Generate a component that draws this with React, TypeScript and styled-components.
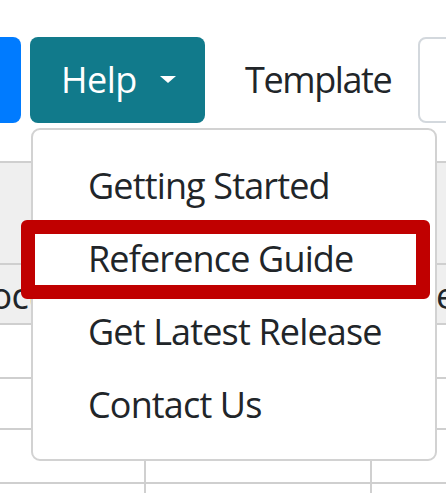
import React from "react";
import styled, { createGlobalStyle } from "styled-components";

const GlobalStyle = createGlobalStyle`
  body {
    margin: 0;
    background: #ffffff;
    overflow: hidden;
    font-family: "Open Sans", "Noto Sans", sans-serif;
    color: #212529;
  }
`;

const Page = styled.div`
  width: 446px;
  height: 493px;
  overflow: hidden;
`;

const Toolbar = styled.div`
  display: flex;
  align-items: center;
  height: 86px;
  padding-top: 37px;
  margin-left: -79px;

  & > * {
    flex-shrink: 0;
  }
`;

const PrimaryButton = styled.div`
  width: 100px;
  height: 86px;
  background: #007bff;
  border-radius: 8px;
  margin-right: 9px;
`;

const DropdownWrap = styled.div`
  position: relative;
`;

const HelpButton = styled.div`
  display: flex;
  align-items: center;
  width: 175px;
  height: 86px;
  box-sizing: border-box;
  padding-left: 31px;
  background: #117a8b;
  border-radius: 8px;
  color: #ffffff;
  font-size: 36px;
  letter-spacing: -0.5px;
  line-height: 86px;
`;

const Caret = styled.span`
  width: 0;
  height: 0;
  margin-left: 23px;
  margin-top: -2px;
  border-top: 7px solid #ffffff;
  border-left: 8px solid transparent;
  border-right: 8px solid transparent;
`;

const Label = styled.div`
  margin-left: 40px;
  font-size: 36px;
  letter-spacing: -1.4px;
  line-height: 86px;
  color: #212529;
`;

const InputBox = styled.div`
  width: 80px;
  height: 86px;
  box-sizing: border-box;
  border: 2px solid #d3d8dd;
  border-radius: 8px;
`;

const Spacer = styled.div<{ $w: number }>`
  width: ${(p) => p.$w}px;
`;

const Menu = styled.div`
  position: absolute;
  top: 91px;
  left: 1px;
  width: 406px;
  height: 333px;
  box-sizing: border-box;
  padding-top: 19px;
  background: #ffffff;
  border: 2px solid #d2d2d2;
  border-radius: 9px;
  z-index: 2;
`;

const MenuItem = styled.div`
  position: relative;
  height: 73px;
  padding-left: 55px;
  font-size: 36px;
  letter-spacing: -0.85px;
  line-height: 73px;
  color: #212529;
  white-space: nowrap;
`;

const Highlight = styled.div`
  position: absolute;
  left: -12px;
  right: 5px;
  top: -2px;
  bottom: -4px;
  border: 14px solid #c00000;
  border-radius: 6px;
`;

const Table = styled.div`
  margin-top: 38px;
  margin-left: -50px;
  border-top: 2px solid #cfcfcf;
`;

const Row = styled.div<{ $h: number; $head?: boolean }>`
  display: grid;
  grid-template-columns: 196px 226px 200px;
  height: ${(p) => p.$h}px;
  background: ${(p) => (p.$head ? "#efefef" : "#ffffff")};
  border-bottom: 2px solid #cfcfcf;
`;

const Cell = styled.div<{ $pad?: number }>`
  border-right: 2px solid #d0d0d0;
  padding-left: ${(p) => p.$pad ?? 0}px;
  font-size: 36px;
  letter-spacing: -0.6px;
  line-height: 62px;
  white-space: nowrap;
  overflow: hidden;
  color: #212529;
`;

const items = ["Getting Started", "Reference Guide", "Get Latest Release", "Contact Us"];

const rows = [
  { h: 100, head: true, texts: ["", "", ""] },
  { h: 58, head: true, texts: ["Document", "", "Type"] },
  { h: 52, texts: ["", "", ""] },
  { h: 49, texts: ["", "", ""] },
  { h: 52, texts: ["", "", ""] },
  { h: 52, texts: ["", "", ""] },
];

const App: React.FC = () => {
  return (
    <Page>
      <GlobalStyle />
      <Toolbar>
        <PrimaryButton />
        <DropdownWrap>
          <HelpButton>
            Help
            <Caret />
          </HelpButton>
          <Menu>
            {items.map((item) => (
              <MenuItem key={item}>
                {item}
                {item === "Reference Guide" && <Highlight />}
              </MenuItem>
            ))}
          </Menu>
        </DropdownWrap>
        <Label>Template</Label>
        <Spacer $w={27} />
        <InputBox />
      </Toolbar>
      <Table>
        {rows.map((row, i) => (
          <Row key={i} $h={row.h} $head={row.head}>
            <Cell $pad={15}>{row.texts[0]}</Cell>
            <Cell>{row.texts[1]}</Cell>
            <Cell $pad={6}>{row.texts[2]}</Cell>
          </Row>
        ))}
      </Table>
    </Page>
  );
};

export default App;
